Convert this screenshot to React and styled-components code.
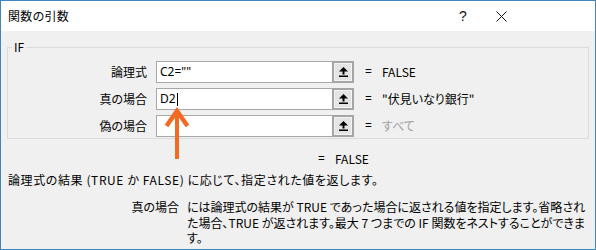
import React from 'react';
import styled, { createGlobalStyle } from 'styled-components';

const GlobalStyle = createGlobalStyle`
  html, body {
    margin: 0;
    padding: 0;
    background: #ffffff;
  }
  body {
    font-family: "Noto Sans CJK JP", "Noto Sans", sans-serif;
    font-size: 12px;
    color: #000;
    font-feature-settings: "palt";
  }
`;

const Window = styled.div`
  position: relative;
  width: 596px;
  height: 250px;
  box-sizing: border-box;
  border: 1px solid #3f86bd;
  background: #f0f0f0;
  display: flex;
  flex-direction: column;
  overflow: hidden;
`;

const TitleBar = styled.div`
  height: 30px;
  background: #ffffff;
  display: flex;
  align-items: center;
  padding-left: 7px;
`;

const Title = styled.div`
  flex: 1;
  font-size: 12px;
  line-height: 16px;
  letter-spacing: 0.3px;
`;

const TitleButton = styled.div`
  width: 38px;
  height: 30px;
  display: flex;
  align-items: center;
  justify-content: center;
  font-family: "Liberation Sans", sans-serif;
  font-size: 14px;
  color: #111;
`;

const Body = styled.div`
  padding: 0 6px;
  display: flex;
  flex-direction: column;
`;

const Group = styled.fieldset`
  margin: 9px 0 0;
  padding: 7px 0 4px 0;
  height: 99px;
  box-sizing: border-box;
  border: 1px solid #dcdcdc;
  display: flex;
  flex-direction: column;
  gap: 5px;
`;

const Legend = styled.legend`
  margin-left: 4px;
  padding: 0 2px;
  font-size: 12px;
  line-height: 14px;
`;

const Row = styled.div`
  display: flex;
  align-items: center;
  height: 22px;
`;

const Label = styled.div`
  width: 139px;
  margin-right: 9px;
  text-align: right;
  line-height: 16px;
`;

const InputBox = styled.div`
  width: 198px;
  height: 22px;
  box-sizing: border-box;
  display: flex;
  border: 1px solid #a8a8a8;
  border-right: none;
  background: #ffffff;
`;

const InputText = styled.div`
  flex: 1;
  padding-left: 3px;
  line-height: 20px;
  font-family: "Noto Sans", sans-serif;
  font-size: 12px;
  display: flex;
  align-items: center;
`;

const Caret = styled.span`
  display: inline-block;
  width: 1px;
  height: 13px;
  background: #000;
  margin-left: 1px;
`;

const RefButton = styled.div`
  width: 22px;
  height: 22px;
  margin-top: -1px;
  box-sizing: border-box;
  border: 2px solid #a5a5a5;
  background: #e4e4e4;
  display: flex;
  align-items: center;
  justify-content: center;
  box-shadow: inset 0 0 0 1px #f4f4f4;
`;

const Equals = styled.div`
  width: 17px;
  margin-left: ${(p) => p.offset || 11}px;
  font-family: "Noto Sans", sans-serif;
  line-height: 16px;
`;

const Value = styled.div`
  line-height: 16px;
  color: ${(p) => (p.muted ? '#a0a0a0' : '#000')};
`;

const ResultRow = styled.div`
  display: flex;
  margin-top: 12px;
  height: 16px;
  align-items: center;
`;

const Description = styled.div`
  margin-top: 5px;
  margin-left: 1px;
  line-height: 16px;
  white-space: nowrap;
  letter-spacing: 0.6px;
`;

const HelpRow = styled.div`
  display: flex;
  margin-top: 11px;
`;

const HelpLabel = styled.div`
  width: 172px;
  text-align: right;
  line-height: 15.5px;
  margin-right: 8px;
`;

const HelpText = styled.div`
  line-height: 15.5px;
  white-space: nowrap;
`;

const Line = styled.div``;

const Pointer = styled.svg`
  position: absolute;
  left: 163px;
  top: 106px;
`;

function PickIcon() {
  return (
    <svg width="9" height="10" viewBox="0 0 9 10">
      <polygon points="4.5,0 0,4.5 9,4.5" fill="#000" />
      <rect x="3.5" y="4" width="2" height="3.5" fill="#000" />
      <rect x="0" y="8.5" width="9" height="1.5" fill="#000" />
    </svg>
  );
}

function CloseIcon() {
  return (
    <svg width="11" height="11" viewBox="0 0 11 11">
      <path d="M0.5 0.5 L10.5 10.5 M10.5 0.5 L0.5 10.5" stroke="#111" strokeWidth="1" />
    </svg>
  );
}

const args = [
  { label: '論理式', text: 'C2=""', value: 'FALSE' },
  { label: '真の場合', text: 'D2', value: '"伏見いなり銀行"', caret: true },
  { label: '偽の場合', text: '', value: 'すべて', muted: true },
];

export default function App() {
  return (
    <>
      <GlobalStyle />
      <Window>
        <TitleBar>
          <Title>関数の引数</Title>
          <TitleButton>?</TitleButton>
          <TitleButton style={{ marginRight: 75 }}>
            <CloseIcon />
          </TitleButton>
        </TitleBar>
        <Body>
          <Group>
            <Legend>IF</Legend>
            {args.map((a) => (
              <Row key={a.label}>
                <Label>{a.label}</Label>
                <InputBox>
                  <InputText>
                    {a.text}
                    {a.caret && <Caret />}
                  </InputText>
                  <RefButton>
                    <PickIcon />
                  </RefButton>
                </InputBox>
                <Equals>=</Equals>
                <Value muted={a.muted}>{a.value}</Value>
              </Row>
            ))}
          </Group>
          <ResultRow>
            <Equals offset={311}>=</Equals>
            <Value>FALSE</Value>
          </ResultRow>
          <Description>
            論理式の結果 (TRUE か FALSE) に応じて、指定された値を返します。
          </Description>
          <HelpRow>
            <HelpLabel>真の場合</HelpLabel>
            <HelpText>
              <Line>には論理式の結果が TRUE であった場合に返される値を指定します。省略され</Line>
              <Line>た場合、TRUE が返されます。最大 7 つまでの IF 関数をネストすることができま</Line>
              <Line>す。</Line>
            </HelpText>
          </HelpRow>
        </Body>
        <Pointer width="28" height="52" viewBox="0 0 28 52">
          <polyline
            points="2.5,19 13,4 23.5,19"
            fill="none"
            stroke="#f26b22"
            strokeWidth="4.5"
            strokeLinejoin="miter"
          />
          <rect x="11" y="3" width="4" height="49" fill="#f26b22" />
        </Pointer>
      </Window>
    </>
  );
}
